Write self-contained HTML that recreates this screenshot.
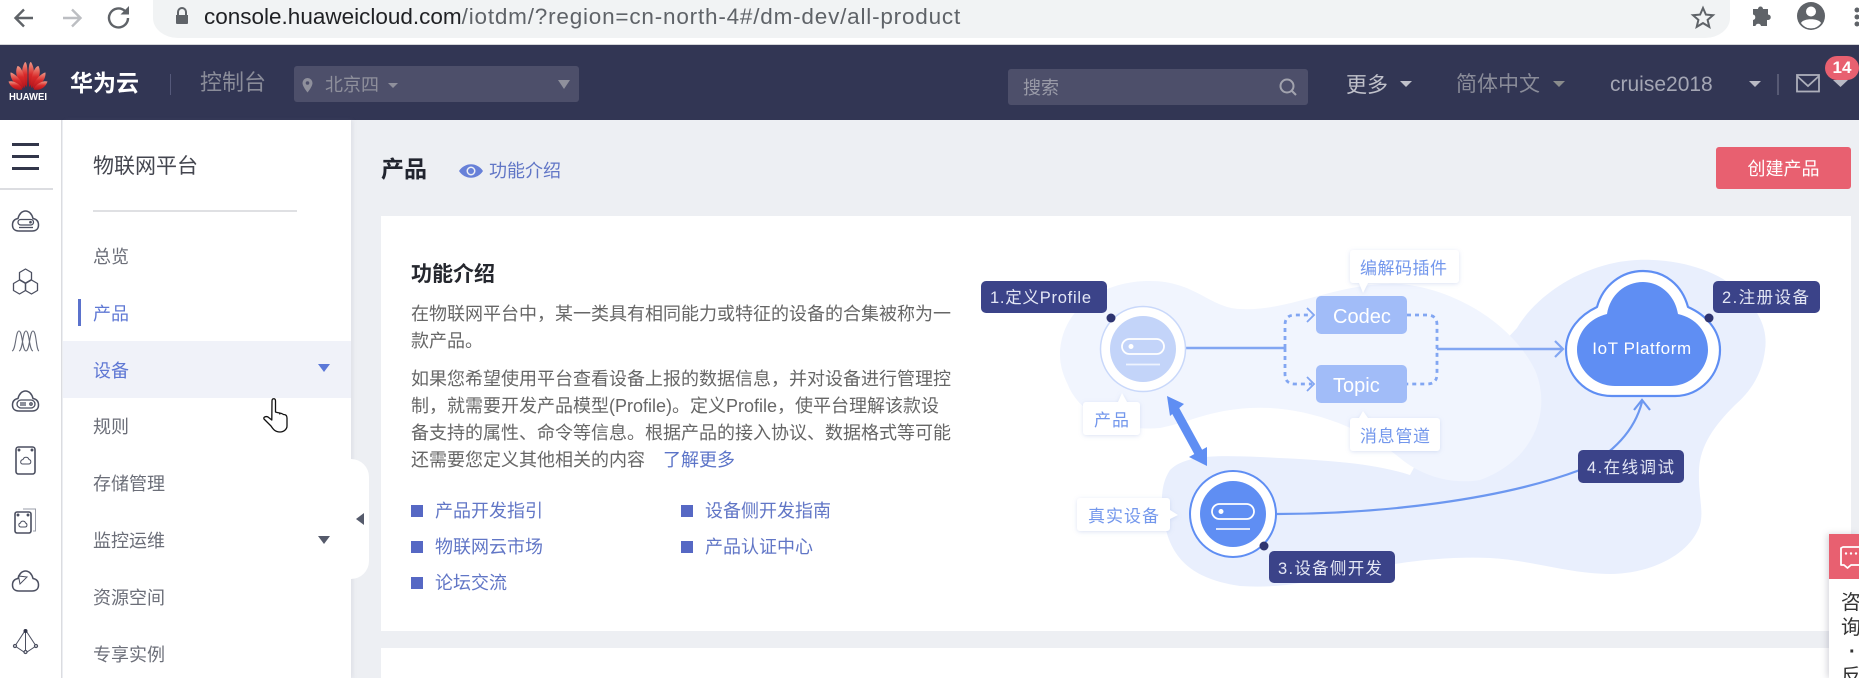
<!DOCTYPE html>
<html lang="zh"><head><meta charset="utf-8"><title>产品</title>
<style>
*{box-sizing:border-box}
html,body{margin:0;padding:0}
body{width:1859px;height:678px;overflow:hidden;position:relative;background:#edeff3;font-family:"Liberation Sans","Noto Sans CJK SC",sans-serif}
.a{position:absolute}
.t{position:absolute;white-space:nowrap;line-height:24px;height:24px}
.m{font-size:18px;color:#6b6e78;left:93px}
.l{font-size:18px;color:#6176c6}
.s{position:absolute;width:12px;height:12px;background:#5668c4}
.p{position:absolute;left:411px;font-size:18px;color:#666;line-height:27px;white-space:nowrap}
svg{position:absolute;overflow:visible}
</style></head><body>

<!-- browser chrome -->
<div class="a" style="left:0;top:0;width:1859px;height:45px;background:#fff;border-bottom:1px solid #d5d6d9"></div>
<div class="a" style="left:153px;top:-12px;width:1577px;height:50px;background:#f1f3f4;border-radius:0 0 25px 25px/0 0 20px 20px"></div>
<svg style="left:0;top:0" width="240" height="40" fill="none">
<path d="M33 18H17M24 9.5L15.5 18 24 26.5" stroke="#5f6368" stroke-width="2.4"/>
<path d="M81 18H65M72 9.5L63.5 18 72 26.5" stroke="#bcbec2" stroke-width="2.4" transform="rotate(180 72 18)"/>
<path d="M128 18a9.5 9.5 0 1 1-3-7" stroke="#5f6368" stroke-width="2.4"/><path d="M129 6v8.5h-8.5z" fill="#5f6368"/>
<path d="M176 15v8a1 1 0 0 0 1 1h10a1 1 0 0 0 1-1v-8z" fill="#5f6368"/><path d="M178 15v-3a4 4 0 0 1 8 0v3" stroke="#5f6368" stroke-width="2"/>
</svg>
<div class="t" style="left:204px;top:5px;font-size:22.5px;color:#202124">console.huaweicloud.com<span style="color:#5f6368;letter-spacing:.8px">/iotdm/?region=cn-north-4#/dm-dev/all-product</span></div>
<svg style="left:1690px;top:3px" width="169" height="30" fill="none">
<path d="M13 5l2.9 6.600 7.100.6-5.400 4.700 1.700 7L13 20.100 6.700 23.900l1.700-7L3 12.200l7.100-.6z" stroke="#5f6368" stroke-width="2"/>
<path d="M64 7h5a2.500 2.500 0 0 1 5 0h5v5.500a2.700 2.700 0 0 1 0 5.500h-1v6h-6a2.800 2.800 0 0 0-5.500 0H64v-6a2.800 2.800 0 0 0 0-5.500z" fill="#5f6368" transform="translate(-1 -1)"/>
<circle cx="121" cy="13" r="14" fill="#5f6368"/><circle cx="121" cy="8.500" r="5" fill="#fff"/><path d="M111 20c2-5 18-5 20 0a12 12 0 0 1-20 0z" fill="#fff"/>
<circle cx="167" cy="7" r="2.500" fill="#5f6368"/><circle cx="167" cy="14" r="2.500" fill="#5f6368"/><circle cx="167" cy="21" r="2.500" fill="#5f6368"/>
</svg>

<!-- top nav -->
<div class="a" style="left:0;top:45px;width:1859px;height:75px;background:#323654"></div>
<svg style="left:8px;top:61px" width="40" height="40">
<defs><linearGradient id="hw" x1="0" y1="0" x2="0" y2="1"><stop offset="0" stop-color="#f09a88"/><stop offset=".5" stop-color="#d92a2a"/><stop offset="1" stop-color="#b0141c"/></linearGradient></defs>
<g fill="url(#hw)">
<path d="M18.800 26C13 20 12.500 8 17 1c3-.5 3 18 1.800 25z"/><path d="M21.200 26C27 20 27.500 8 23 1c-3-.5-3 18-1.800 25z"/>
<path d="M17 27C10 21 6 12 9.500 5c4 0 8.500 12 7.500 22z"/><path d="M23 27c7-6 11-15 7.500-22-4 0-8.500 12-7.500 22z"/>
<path d="M15.500 27.500C8 25 2 19 2.500 11.500c4 .5 12 8 13 16z"/><path d="M24.500 27.500c7.500-2.500 13.500-8.500 13-16-4 .5-12 8-13 16z"/>
<path d="M14.500 28.500C9 30 2.500 27 .5 20.500c4.500-1.500 12.500 3 14 8z"/><path d="M25.500 28.500c5.500 1.500 12-1.500 14-8-4.500-1.500-12.500 3-14 8z"/>
</g>
<text x="20" y="39" text-anchor="middle" font-size="10.500" font-weight="bold" fill="#fff" font-family="Liberation Sans" textLength="38" lengthAdjust="spacingAndGlyphs">HUAWEI</text>
</svg>
<div class="t" style="left:70px;top:71px;font-size:23px;font-weight:bold;color:#fff">华为云</div>
<div class="a" style="left:170px;top:74px;width:1px;height:21px;background:#55597a"></div>
<div class="t" style="left:200px;top:71px;font-size:22px;color:#8a8c99">控制台</div>
<div class="a" style="left:294px;top:66px;width:285px;height:36px;background:#4d4f6a;border-radius:3px"></div>
<svg style="left:300px;top:74px" width="280" height="22">
<path d="M7.500 4a5 5 0 0 0-5 5c0 3.500 5 9.500 5 9.500s5-6 5-9.500a5 5 0 0 0-5-5z" fill="#8f909c"/><circle cx="7.500" cy="9" r="1.800" fill="#4d4f6a"/>
<path d="M88 9h10l-5 5z" fill="#8f909c"/><path d="M258 6h12l-6 9z" fill="#8f909c"/>
</svg>
<div class="t" style="left:325px;top:73px;font-size:18px;color:#8f909c">北京四</div>

<div class="a" style="left:1008px;top:69px;width:300px;height:36px;background:#4d4f6a;border-radius:3px"></div>
<div class="t" style="left:1023px;top:76px;font-size:18px;color:#9a9ba8">搜索</div>
<svg style="left:1278px;top:77px" width="20" height="20" fill="none"><circle cx="9" cy="9" r="6.500" stroke="#a2a3ae" stroke-width="2"/><path d="M13.500 13.500l4.500 4.500" stroke="#a2a3ae" stroke-width="2"/></svg>
<div class="t" style="left:1346px;top:74px;font-size:21px;color:#c0c1ca">更多</div>
<div class="t" style="left:1456px;top:73px;font-size:21px;color:#8a8c99">简体中文</div>
<div class="t" style="left:1610px;top:73px;font-size:21px;color:#a4a6b4">cruise2018</div>
<svg style="left:1390px;top:60px" width="469" height="50" fill="none">
<path d="M10 21h12l-6 6z" fill="#c0c1ca"/>
<path d="M163 21h12l-6 6z" fill="#8a8c8c"/>
<path d="M359 21h12l-6 6z" fill="#b9bac4"/>
<path d="M388 14v21" stroke="#70738a" stroke-width="1.200"/>
<rect x="407" y="15" width="22" height="16.500" stroke="#adafbb" stroke-width="1.800"/><path d="M407 16l11 10 11-10" stroke="#adafbb" stroke-width="1.800"/>
<path d="M443 20h15l-7.500 7z" fill="#b9bac4"/>
</svg>
<div class="a" style="left:1825px;top:56px;width:34px;height:24px;background:#e86070;border-radius:12px;color:#fff;font-size:17px;font-weight:bold;text-align:center;line-height:24px">14</div>

<!-- left rail -->
<div class="a" style="left:0;top:120px;width:62px;height:558px;background:#fff;border-right:1px solid #dcdde1"></div>
<div class="a" style="left:12px;top:143px;width:27px;height:3px;background:#32364a"></div>
<div class="a" style="left:12px;top:155px;width:27px;height:3px;background:#32364a"></div>
<div class="a" style="left:12px;top:167px;width:27px;height:3px;background:#32364a"></div>
<div class="a" style="left:0;top:188px;width:53px;height:2px;background:#dcdde1"></div>
<svg style="left:0;top:200px" width="62" height="478" fill="none" stroke="#4b4f60" stroke-width="1.300">
<defs><path id="cl" d="M19 31C14 31 12.500 28 12.500 25C12.500 21 15 19 18 18.500C19 14 22 11 25.500 11C29 11 32 14 33 18.500C36 19 38.500 21 38.500 25C38.500 28 37 31 32 31Z" stroke-width="1.500"/></defs>
<!-- cloud 1 -->
<use href="#cl"/>
<rect x="18" y="19.500" width="15.500" height="5.500" rx="2.700"/><path d="M19 27.500h14"/><circle cx="30.500" cy="22.200" r=".7" fill="#4b4f60"/>
<!-- hex -->
<g transform="translate(0 62)"><path d="M25.500 7l6 3.500v7l-6 3.500-6-3.500v-7z" stroke-linejoin="round"/><path d="M19.500 18l6 3.500v7l-6 3.500-6-3.500v-7z" stroke-linejoin="round"/><path d="M31.500 18l6 3.500v7l-6 3.500-6-3.500v-7z" stroke-linejoin="round"/></g>
<!-- waves -->
<g stroke="#666a78" stroke-width="1.100">
<path d="M12 151C16 150 15.500 131 19 131C22.500 131 22 150 26 151"/>
<path d="M19 151C23 150 22.500 131 26 131C29.500 131 29 150 33 151"/>
<path d="M26 151C30 150 29.500 131 33 131C36.500 131 36 150 39 151"/>
</g>
<!-- cloud 2 -->
<use href="#cl" y="180"/>
<rect x="17" y="200" width="18" height="8" rx="4"/><path d="M20 203h6M20 205h6"/><circle cx="31" cy="204" r="1.200"/>
<!-- card -->
<rect x="16" y="247" width="19" height="27" rx="2.500" stroke-width="1.600"/><circle cx="19" cy="250" r=".8" fill="#4b4f60"/><circle cx="32" cy="250" r=".8" fill="#4b4f60"/>
<path d="M22.500 264h6c3 0 3-4 .5-4.500-1-3-5-3-6 0-3 .5-3 4.500-.5 4.500z" stroke-width="1"/>
<!-- cards -->
<path d="M23 309h12.500v22H33" stroke="#9a9da8" stroke-width="1"/>
<rect x="15" y="312" width="16" height="21" rx="2" stroke-width="1.600"/><circle cx="18" cy="315" r=".8" fill="#4b4f60"/><circle cx="28" cy="315" r=".8" fill="#4b4f60"/>
<path d="M21 327h4c2.500 0 2.500-3.500.5-4-.7-2.500-4.500-2.500-5 0-2.500.5-2 4 .5 4z" stroke-width="1"/>
<!-- cloud 3 -->
<use href="#cl" y="360"/><path d="M20 384l-1.500-8 8.500 1z" stroke-width="1"/>
<!-- pyramid -->
<path d="M25.500 430L15 446l10.500 7 10.500-7zM25.500 430v23" stroke-width="1"/><circle cx="25.500" cy="431" r="2" fill="#32364a" stroke="none"/><circle cx="15" cy="446" r="1.500" fill="#fff"/><circle cx="36" cy="446" r="1.500" fill="#fff"/><circle cx="25.500" cy="452" r="1.500" fill="#fff"/>
</svg>

<!-- nav column -->
<div class="a" style="left:63px;top:120px;width:288px;height:558px;background:#fff;box-shadow:2px 0 4px rgba(120,125,150,.12)"></div>
<div class="t" style="left:93px;top:155px;font-size:21px;color:#44464f">物联网平台</div>
<div class="a" style="left:93px;top:210px;width:204px;height:2px;background:#dfe0e3"></div>
<div class="a" style="left:63px;top:341px;width:288px;height:57px;background:#f0f2f9"></div>
<div class="a" style="left:78px;top:299px;width:3px;height:27px;background:#5b72cc"></div>
<div class="t m" style="top:245px">总览</div>
<div class="t m" style="top:302px;color:#5f78d4">产品</div>
<div class="t m" style="top:359px;color:#5f78d4">设备</div>
<div class="t m" style="top:415px">规则</div>
<div class="t m" style="top:472px">存储管理</div>
<div class="t m" style="top:529px">监控运维</div>
<div class="t m" style="top:586px">资源空间</div>
<div class="t m" style="top:643px">专享实例</div>
<svg style="left:300px;top:350px" width="80" height="200">
<path d="M18 14h12l-6 8z" fill="#5b78d8"/><path d="M18 186h12l-6 8z" fill="#555a6b"/>
</svg>
<div class="a" style="left:351px;top:459px;width:18px;height:120px;background:#fff;border-radius:0 18px 18px 0"></div>
<svg style="left:354px;top:510px" width="14" height="24"><path d="M10 3v12L2 9z" fill="#555a6b"/></svg>
<svg style="left:260px;top:396px" width="32" height="38" fill="#fff" stroke="#111" stroke-width="1.300" stroke-linejoin="round">
<path d="M12 5c0-3 3.500-3 3.500 0v11c3 1 3 .5 4 1l.3 1-.3-1c3 .5 3 1 4 1.500 2.500 0 3.500 1.500 3.500 3.500v8c0 3-3 6-7 6-5 0-7-3-9-6l-7-7c-1-2 2-3 4-2l3.800 3z"/>
</svg>

<!-- main header -->
<div class="t" style="left:381px;top:157px;font-size:23px;font-weight:bold;color:#22252f">产品</div>
<svg style="left:458px;top:162px" width="26" height="18"><path d="M1 9c6-9 18-9 24 0-6 9-18 9-24 0z" fill="#6780d8"/><circle cx="13" cy="9" r="4.500" fill="#edeff3"/><circle cx="13" cy="9" r="3" fill="#6780d8"/></svg>
<div class="t" style="left:489px;top:159px;font-size:18px;color:#6176c6">功能介绍</div>
<div class="a" style="left:1716px;top:147px;width:135px;height:42px;background:#e86070;border-radius:3px;color:#fff;font-size:18px;text-align:center;line-height:44px">创建产品</div>

<!-- card -->
<div class="a" style="left:381px;top:216px;width:1470px;height:415px;background:#fff"></div>
<div class="a" style="left:381px;top:648px;width:1470px;height:30px;background:#fff"></div>
<div class="t" style="left:411px;top:263px;font-size:21px;font-weight:bold;color:#25272e">功能介绍</div>
<div class="p" style="top:301px">在物联网平台中，某一类具有相同能力或特征的设备的合集被称为一<br>款产品。</div>
<div class="p" style="top:366px">如果您希望使用平台查看设备上报的数据信息，并对设备进行管理控<br>制，就需要开发产品模型(Profile)。定义Profile，使平台理解该款设<br>备支持的属性、命令等信息。根据产品的接入协议、数据格式等可能<br>还需要您定义其他相关的内容<span style="color:#5c74c8;margin-left:18px">了解更多</span></div>
<div class="s" style="left:411px;top:505px"></div><div class="t l" style="left:435px;top:499px">产品开发指引</div>
<div class="s" style="left:681px;top:505px"></div><div class="t l" style="left:705px;top:499px">设备侧开发指南</div>
<div class="s" style="left:411px;top:541px"></div><div class="t l" style="left:435px;top:535px">物联网云市场</div>
<div class="s" style="left:681px;top:541px"></div><div class="t l" style="left:705px;top:535px">产品认证中心</div>
<div class="s" style="left:411px;top:577px"></div><div class="t l" style="left:435px;top:571px">论坛交流</div>

<!-- diagram -->
<svg style="left:0;top:0" width="1859" height="678" fill="none" font-family="Liberation Sans, Noto Sans CJK SC, sans-serif">
<defs><filter id="sh" x="-20%" y="-20%" width="140%" height="150%"><feDropShadow dx="0" dy="1" stdDeviation="2" flood-color="#8fa6dc" flood-opacity=".3"/></filter></defs>
<path d="M1517 328C1540 290 1590 262 1637 260C1680 258 1720 272 1737 290C1760 310 1768 330 1765 350C1762 375 1750 392 1735 405C1715 425 1700 445 1699 470C1698 495 1704 510 1700 525C1690 555 1650 574 1610 574C1570 574 1530 560 1490 558C1440 556 1390 563 1340 575C1300 585 1270 588 1240 586C1200 580 1175 565 1166 530C1160 505 1160 485 1170 470C1185 455 1215 455 1260 457C1320 460 1370 462 1410 475L1450 400z" fill="#e9effd"/>
<path d="M1060 355C1060 315 1095 281 1150 281C1195 281 1210 308 1240 309C1290 312 1340 281 1400 284C1450 288 1510 320 1535 370C1552 410 1535 460 1480 480C1450 485 1420 475 1400 458C1360 425 1300 405 1250 408C1210 410 1190 422 1160 428C1110 432 1078 410 1068 385C1063 375 1060 365 1060 355z" fill="#f1f5fe"/>

<!-- connectors -->
<path d="M1186 348H1285" stroke="#82a6f2" stroke-width="2.500"/>
<path d="M1285 348V325Q1285 315 1295 315H1312M1285 348V374Q1285 384 1295 384H1312" stroke="#82a6f2" stroke-width="2.800" stroke-dasharray="4 4"/>
<path d="M1307 308L1314 315L1307 322M1307 377L1314 384L1307 391" stroke="#82a6f2" stroke-width="1.800"/>
<path d="M1407 315H1427Q1437 315 1437 325V374Q1437 384 1427 384H1407" stroke="#82a6f2" stroke-width="2.800" stroke-dasharray="4 4"/>
<path d="M1437 349H1562" stroke="#82a6f2" stroke-width="2.500"/><path d="M1555 341L1563 349L1555 357" stroke="#82a6f2" stroke-width="2.200"/>
<path d="M1277 514C1380 514 1500 500 1580 470C1620 450 1636 425 1642 402" stroke="#6c97f0" stroke-width="2.200"/>
<path d="M1634 410L1642 400L1650 410" stroke="#6c97f0" stroke-width="2.200"/>

<!-- double arrow -->
<path d="M1173 406L1201 457" stroke="#5f8ef3" stroke-width="9"/>
<path d="M1167 396L1184 404L1170 416z" fill="#5f8ef3"/>
<path d="M1207 466L1189 457L1207 447z" fill="#5f8ef3"/>

<!-- boxes -->
<rect x="1316" y="296" width="91" height="38" rx="5" fill="#a1bcf8"/>
<rect x="1316" y="365" width="91" height="38" rx="5" fill="#a1bcf8"/>
<text x="1333" y="323" font-size="20" fill="#fff">Codec</text>
<text x="1333" y="392" font-size="20" fill="#fff">Topic</text>

<!-- circles -->
<circle cx="1143" cy="349" r="42.500" fill="#fff" stroke="#c9d8fa" stroke-width="1.500"/>
<circle cx="1143" cy="349" r="33" fill="#c3d4f9"/>
<rect x="1122" y="339" width="42" height="15" rx="7.500" stroke="#fff" stroke-width="1.800"/><circle cx="1131" cy="346.500" r="2.500" fill="#fff"/><path d="M1126 364.500h34" stroke="#eef3fe" stroke-width="1.800"/>
<circle cx="1233" cy="514" r="43" fill="#fff" stroke="#5f8ef3" stroke-width="2"/>
<circle cx="1233" cy="514" r="33" fill="#5f8ef3"/>
<rect x="1212" y="504" width="42" height="15" rx="7.500" stroke="#fff" stroke-width="1.800"/><circle cx="1221" cy="511.500" r="2.500" fill="#fff"/><path d="M1216 529h34" stroke="#eef3fe" stroke-width="1.800"/>

<!-- cloud -->
<path d="M1612 396C1585 396 1566 375 1566 350C1566 330 1580 315 1597 307C1603 285 1622 271 1643 271C1665 271 1682 285 1688 307C1706 315 1720 330 1720 350C1720 375 1700 396 1675 396Z" fill="#fff" stroke="#5f8ef3" stroke-width="2.200" stroke-linejoin="round"/>
<path d="M1615 386C1593 386 1577 368 1577 350C1577 332 1590 318 1607 314C1610 295 1625 282 1643 282C1660 282 1675 295 1678 314C1696 318 1708 332 1708 350C1708 368 1692 386 1670 386Z" fill="#5f8ef3"/>
<text x="1642" y="354" text-anchor="middle" font-size="17" fill="#fff" letter-spacing=".6">IoT Platform</text>

<!-- white tags -->
<g filter="url(#sh)" fill="#fff">
<path d="M1353 250H1456a3 3 0 0 1 3 3V280a3 3 0 0 1-3 3H1368L1363 293L1359 283H1353a3 3 0 0 1-3-3V253a3 3 0 0 1 3-3z"/>
<path d="M1353 418H1359L1363 411L1368 418H1437a3 3 0 0 1 3 3V448a3 3 0 0 1-3 3H1353a3 3 0 0 1-3-3V421a3 3 0 0 1 3-3z"/>
<path d="M1086 402H1118L1122 393L1127 402H1137a3 3 0 0 1 3 3V432a3 3 0 0 1-3 3H1086a3 3 0 0 1-3-3V405a3 3 0 0 1 3-3z"/>
<path d="M1080 498H1167a3 3 0 0 1 3 3V510L1178 515L1170 519V528a3 3 0 0 1-3 3H1080a3 3 0 0 1-3-3V501a3 3 0 0 1 3-3z"/>
</g>
<g font-size="17" fill="#7397ec">
<text x="1360" y="274" textLength="87">编解码插件</text>
<text x="1360" y="442" textLength="70">消息管道</text>
<text x="1094" y="426" textLength="35">产品</text>
<text x="1088" y="522" textLength="71">真实设备</text>
</g>

<!-- dark labels -->
<g fill="#3b4389">
<rect x="981" y="281" width="126" height="32" rx="5"/>
<rect x="1713" y="281" width="107" height="32" rx="5"/>
<rect x="1578" y="450" width="106" height="33" rx="5"/>
<rect x="1269" y="551" width="126" height="32" rx="5"/>
</g>
<g fill="#2e3470"><circle cx="1111" cy="318" r="4.500"/><circle cx="1709" cy="318" r="4.500"/><circle cx="1264" cy="546" r="4.500"/></g>
<g font-size="16.500" fill="#e4e7f5">
<text x="990" y="303" textLength="101">1.定义Profile</text>
<text x="1722" y="303" textLength="87">2.注册设备</text>
<text x="1587" y="473" textLength="87">4.在线调试</text>
<text x="1278" y="574" textLength="104">3.设备侧开发</text>
</g>
</svg>

<!-- chat widget -->
<div class="a" style="left:1829px;top:534px;width:30px;height:144px;background:#fff;box-shadow:-2px 0 6px rgba(100,100,120,.25)"></div>
<div class="a" style="left:1829px;top:534px;width:30px;height:45px;background:#e86070"></div>
<svg style="left:1829px;top:534px" width="30" height="45" fill="none"><path d="M14 13H32V31H22L18.500 34L15 31H12V14z" stroke="#fff" stroke-width="1.800" stroke-linejoin="round"/><circle cx="17" cy="19.500" r="1.200" fill="#fff"/><circle cx="22" cy="19.500" r="1.200" fill="#fff"/><circle cx="27" cy="19.500" r="1.200" fill="#fff"/></svg>
<div class="a" style="left:1841px;top:591px;width:18px;height:87px;overflow:hidden;font-size:20px;line-height:24.500px;color:#333;white-space:nowrap">咨<br>询<br><span style="margin-left:8px;font-weight:bold">·</span><br>反</div>

</body></html>
